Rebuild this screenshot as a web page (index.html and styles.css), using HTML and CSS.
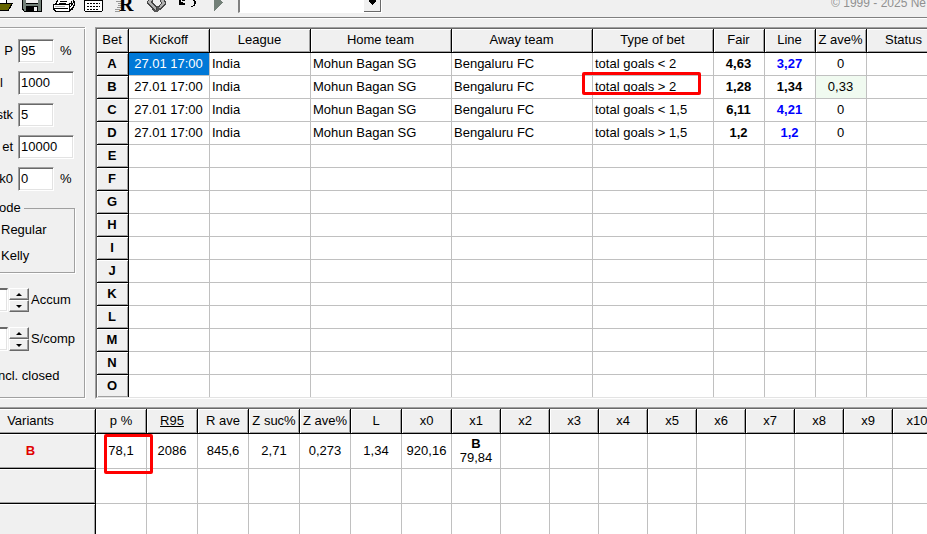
FILE: index.html
```html
<!DOCTYPE html>
<html lang="en">
<head>
<meta charset="utf-8">
<title>Bets</title>
<link rel="stylesheet" href="styles.css">
</head>
<body>
<header class="toolbar">
  <div class="tools">
    <button class="tool" aria-label="Open"><svg width="14" height="13" shape-rendering="crispEdges"><path d="M0 0h6v3h-6z" fill="#fff"/><path d="M0 3h13v1h-1v2h-1v2h-1v1h-1v2H0z" fill="#000"/><path d="M0 4h11v1h-1v2h-1v2H8v1H0z" fill="#666600"/><path d="M6 0h1v3H6z"/></svg></button>
    <button class="tool tool-save" aria-label="Save"><svg width="20" height="12" shape-rendering="crispEdges"><path d="M0 0h20v12H2v-1H1v-1H0z"/><path d="M1 0h18v11H2V9H1z" fill="#738078"/><path d="M4 0h12v3H4z" fill="#f0f0f0"/><path d="M4 3h12v1H4zM4 6h12v6H4z"/><path d="M12 7h3v4h-3z" fill="#f0f0f0"/></svg></button>
    <button class="tool tool-print" aria-label="Print"><svg width="24" height="12" shape-rendering="crispEdges"><path d="M5 0h14l-3 4h5v5l-5 2H3L1 9V4z" fill="#fff"/><path d="M5 0v1H4v2H3v1H1v5h1v1h1v1h14v-1h1V9h2V7h1V5h1V1h-1V0M3 4h12M8 1h7M7 3h7M2 8h14M15 4h2V3h2V1h1M17 4v6M18 7l4-5" fill="none" stroke="#000"/><path d="M3 6h10" stroke="#aaa"/><path d="M18 6h1v1h-1zM20 4h1v1h-1zM19 8h1v1h-1z"/></svg></button>
    <button class="tool tool-cal" aria-label="Calendar"><svg width="20" height="13" shape-rendering="crispEdges"><path d="M1 0h17v11H1z" fill="#fff"/><path d="M0 0h1v11H0zM18 0h1v11h-1zM1 11h17v1H1zM1 0h17v1H1z"/><path d="M3 3h2v1H3zM6 3h2v1H6zM9 3h2v1H9zM12 3h2v1h-2zM15 3h1v1h-1zM3 6h2v1H3zM6 6h2v1H6zM9 6h2v1H9zM12 6h2v1h-2zM15 6h1v1h-1zM3 9h2v1H3zM6 9h2v1H6zM9 9h2v1H9zM12 9h2v1h-2z"/></svg></button>
    <button class="tool tool-r" aria-label="R"><svg width="20" height="13"><path d="M1 1h5M3 3h4M3 5h4M2 7h4M0 9h5M0 11h5" transform="translate(0 .5)" stroke="#999" shape-rendering="crispEdges"/><text x="4" y="11" class="r-face">R</text></svg></button>
    <button class="tool tool-swap" aria-label="Refresh"><svg width="20" height="13" shape-rendering="crispEdges"><path d="M1 0h5v2l4 5v5H7L5 9L0 4V2zM13 0h5l1 2v2l-6 6h-2V7l3-4z" fill="#444"/><path d="M2 0h3L4 2l5 6v2L1 3zM14 0h3l1 3l-6 6V8l3-5z" fill="#b0b0b0"/><path d="M5 10h5V6l3 3v1l-3 2H7z" fill="#555"/></svg></button>
    <button class="tool tool-undo" aria-label="Undo"><svg width="18" height="8" shape-rendering="crispEdges"><path d="M0 0h2v2h2v1h2v2H0zM3 0h3v1H3zM14 0h2v1h1v3h-1v2h-2V5h1V1h-1zM12 6h2v1h-2z"/></svg></button>
    <button class="tool tool-play" aria-label="Run"><svg width="9" height="12" shape-rendering="crispEdges"><path d="M0 0h6l3 2L0 11z" fill="#738078"/></svg></button>
    <select class="picker" aria-label="Selection"><option></option></select>
  </div>
  <span class="copyright">© 1999 - 2025 Ne</span>
</header>

<main class="workspace">
  <form class="settings">
    <div class="field"><label for="p">P</label><input id="p" class="short" value="95"><span>%</span></div>
    <div class="field"><label for="bank" class="cut">l</label><input id="bank" value="1000"></div>
    <div class="field"><label for="stk">stk</label><input id="stk" class="short" value="5"></div>
    <div class="field"><label for="bet">et</label><input id="bet" value="10000"></div>
    <div class="field"><label for="k0">k0</label><input id="k0" class="short" value="0"><span>%</span></div>
    <fieldset class="mode">
      <legend>ode</legend>
      <p>Regular</p>
      <p>Kelly</p>
    </fieldset>
    <div class="stepper"><span class="well"></span><span class="arrows"><button type="button" class="up" aria-label="Accum up"></button><button type="button" class="down" aria-label="Accum down"></button></span><span>Accum</span></div>
    <div class="stepper"><span class="well"></span><span class="arrows"><button type="button" class="up" aria-label="S/comp up"></button><button type="button" class="down" aria-label="S/comp down"></button></span><span>S/comp</span></div>
    <p class="closed">ncl. closed</p>
  </form>
  <section class="grid bets">
    <table>
      <colgroup><col class="w32"><col class="w81"><col class="w101"><col class="w141"><col class="w141"><col class="w121"><col class="w51"><col class="w51"><col class="w51"><col class="w75"></colgroup>
      <thead><tr><th>Bet</th><th>Kickoff</th><th>League</th><th>Home team</th><th>Away team</th><th>Type of bet</th><th>Fair</th><th>Line</th><th>Z ave%</th><th>Status</th></tr></thead>
      <tbody id="bets"></tbody>
    </table>
  </section>
</main>

<section class="grid variants">
  <table>
    <colgroup><col class="w130"><col class="w51"><col class="w51"><col class="w51"><col class="w51"><col class="w51"><col class="w51"><col class="w50"><col class="w49" span="10"></colgroup>
    <thead><tr><th>Variants</th><th>p %</th><th><u>R95</u></th><th>R ave</th><th>Z suc%</th><th>Z ave%</th><th>L</th><th>x0</th><th>x1</th><th>x2</th><th>x3</th><th>x4</th><th>x5</th><th>x6</th><th>x7</th><th>x8</th><th>x9</th><th>x10</th></tr></thead>
    <tbody id="variants"></tbody>
  </table>
</section>
<script src="app.js"></script>
</body>
</html>
```
FILE: styles.css
```css
*, *::before, *::after { box-sizing: border-box; }
html, body { height: 100%; }
body {
  margin: 0;
  display: flex;
  flex-direction: column;
  overflow: hidden;
  background: #f0f0f0;
  color: #000;
  font: 13px/16px "Liberation Sans", Arial, sans-serif;
}
p { margin: 0; }
button { padding: 0; border: 0; background: none; }

.toolbar {
  flex: none;
  display: flex;
  justify-content: space-between;
  align-items: flex-start;
  height: 19px;
  overflow: hidden;
  border-bottom: 1px solid #fff;
  box-shadow: inset 0 -1px #808080;
}
.tools { display: flex; align-items: flex-start; }
.tool { display: block; }
.tool svg { display: block; }
.tool-save { margin-left: 8px; }
.tool-print { margin-left: 10px; }
.tool-cal { margin-left: 8px; }
.tool-r { margin-left: 11px; }
.tool-swap { margin-left: 12px; }
.tool-undo { margin-left: 12px; }
.tool-play { margin-left: 17px; }
.r-face { font: bold 20px "Liberation Serif", serif; }
.picker {
  appearance: none;
  width: 144px;
  height: 23px;
  margin: -10px 0 0 15px;
  border: 1px solid #fff;
  border-left: 2px solid #808080;
  border-radius: 0;
  background:
    linear-gradient(#000, #000) right 8px top 13px / 1px 1px no-repeat,
    linear-gradient(#000, #000) right 7px top 12px / 3px 1px no-repeat,
    linear-gradient(#000, #000) right 6px top 11px / 5px 1px no-repeat,
    linear-gradient(#000, #000) right 5px top 9px / 7px 2px no-repeat,
    linear-gradient(#696969, #696969) right 0 bottom 0 / 17px 1px no-repeat,
    linear-gradient(#696969, #696969) right 0 bottom 0 / 1px 100% no-repeat,
    linear-gradient(#f0f0f0, #f0f0f0) right 0 bottom 0 / 17px 100% no-repeat,
    #fff;
}
.copyright {
  margin-top: -5px;
  padding-right: 1px;
  color: #909090;
  font-size: 12px;
}

.workspace { flex: none; display: flex; margin-top: 8px; }

.settings {
  flex: none;
  width: 86px;
  overflow: hidden;
  padding-top: 8px;
  border: solid #fff;
  border-width: 0 1px 1px 0;
  box-shadow: inset 0 1px #a0a0a0, inset 0 2px #fff, inset -1px -1px #a0a0a0;
}
.field { display: flex; align-items: center; height: 32px; }
.field label { width: 18px; padding-right: 5px; display: flex; justify-content: flex-end; }
.field label.cut { justify-content: flex-start; }
.field span { margin-left: 6px; }
.field input {
  width: 56px;
  height: 24px;
  padding: 0 0 2px 2px;
  border: 1px solid;
  border-color: #a0a0a0 #fff #fff #a0a0a0;
  border-radius: 0;
  box-shadow: inset 1px 1px #696969, inset -1px -1px #e3e3e3;
  background: #fff;
  color: #000;
  font: inherit;
}
.field input.short { width: 36px; }
.mode {
  width: 76px;
  margin: 5px 0 0 -1px;
  padding: 6px 0 8px 1px;
  border: 1px solid #a0a0a0;
  box-shadow: 1px 1px #fff;
}
.mode legend { margin-left: -2px; padding: 0 3px 0 0; height: 16px; }
.mode p { height: 26px; }
.mode p:last-child { height: 16px; }
.stepper { display: flex; align-items: center; height: 24px; margin-top: 15px; }
.well { width: 8px; height: 24px; background: #fff; border: solid #fff; border-top-color: #696969; border-width: 2px 1px 1px 0; box-shadow: inset -1px -1px #e3e3e3; }
.arrows { display: flex; flex-direction: column; width: 20px; margin: 0 2px 0 1px; }
.up, .down {
  height: 12px;
  display: flex;
  align-items: center;
  justify-content: center;
  background: #f0f0f0;
  border: 1px solid;
  border-color: #fff #696969 #696969 #fff;
  box-shadow: inset -1px -1px #a0a0a0;
}
.up::before, .down::before { content: ""; border: 3px solid transparent; }
.up::before { border-top: 0; border-bottom-color: #000; }
.down::before { border-bottom: 0; border-top-color: #000; }
.closed { margin: 17px 0 0 -2px; }

.grid {
  overflow: hidden;
  background: #fff;
  border-top: 1px solid #a0a0a0;
}
.grid table {
  table-layout: fixed;
  width: 100%;
  border-spacing: 0;
  border-top: 1px solid #696969;
}
.bets {
  flex: 1;
  min-width: 0;
  margin-left: 9px;
  border-left: 1px solid #a0a0a0;
  border-bottom: 1px solid #fff;
}
.bets table { min-width: 846px; border-left: 1px solid #696969; border-bottom: 1px solid #e3e3e3; }
.variants { flex: 1; margin-top: 8px; }
.variants table { min-width: 976px; margin-left: -34px; }

.w32 { width: 32px; } .w49 { width: 49px; } .w50 { width: 50px; }
.w51 { width: 51px; } .w75 { width: 75px; } .w81 { width: 81px; }
.w101 { width: 101px; } .w121 { width: 121px; } .w130 { width: 130px; }
.w141 { width: 141px; }

th, td {
  padding: 0;
  border: solid #c0c0c0;
  border-width: 0 1px 1px 0;
  text-align: center;
  white-space: nowrap;
}
th {
  background: #f0f0f0;
  border-color: #000;
  font-weight: normal;
  box-shadow: inset 1px 1px #fff, inset -1px -1px #a0a0a0;
}
.bets th { height: 24px; padding: 0 1px 1px 0; }
.bets td, .bets tbody th { height: 23px; padding: 0 1px 1px 0; }
.bets tbody th, .strong { font-weight: bold; }
.bets tbody tr:last-child > * { height: 22px; border-bottom: 0; }
.bets td.text { text-align: left; padding-left: 2px; }
.blue { color: #00f; }
.picked { background: #0078d7; color: #fff; }
.value { background: #f0faf0; }
.variants th { height: 25px; padding-bottom: 1px; }
.variants td, .variants tbody th { height: 35px; line-height: 14px; padding-bottom: 0; }
.variants tbody th { color: #e00000; font-weight: bold; }
.split::first-line { font-weight: bold; }

.marked { position: relative; }
.marked::after {
  content: "";
  position: absolute;
  z-index: 1;
  border: 3px solid #f00;
  border-radius: 2px;
}
.mark-type::after { left: -11px; top: -4px; width: 119px; height: 23px; }
.mark-p::after { left: 8px; top: 0; width: 49px; height: 40px; }
```
FILE: app.js
```js
const bets = [
  ["total goals < 2", "4,63", "3,27", "0"],
  ["total goals > 2", "1,28", "1,34", "0,33"],
  ["total goals < 1,5", "6,11", "4,21", "0"],
  ["total goals > 1,5", "1,2", "1,2", "0"],
];

function cell(row, tag, text, cls) {
  const el = document.createElement(tag);
  el.innerText = text || "";
  if (cls) el.className = cls;
  row.append(el);
}

const betBody = document.getElementById("bets");
[..."ABCDEFGHIJKLMNO"].forEach((letter, i) => {
  const row = betBody.insertRow();
  cell(row, "th", letter);
  const bet = bets[i];
  if (!bet) {
    for (let n = 0; n < 9; n++) cell(row, "td");
    return;
  }
  const best = i === 1;
  cell(row, "td", "27.01 17:00", i === 0 ? "picked" : "");
  cell(row, "td", "India", "text");
  cell(row, "td", "Mohun Bagan SG", "text");
  cell(row, "td", "Bengaluru FC", "text");
  cell(row, "td", bet[0], best ? "text marked mark-type" : "text");
  cell(row, "td", bet[1], "strong");
  cell(row, "td", bet[2], best ? "strong" : "strong blue");
  cell(row, "td", bet[3], best ? "value" : "");
  cell(row, "td");
});

const variantBody = document.getElementById("variants");
const values = ["78,1", "2086", "845,6", "2,71", "0,273", "1,34", "920,16", "B\n79,84"];
const marks = { 0: "marked mark-p", 7: "split" };
for (let r = 0; r < 3; r++) {
  const row = variantBody.insertRow();
  cell(row, "th", r ? "" : "B");
  for (let n = 0; n < 17; n++) {
    cell(row, "td", r ? "" : values[n], r ? "" : marks[n]);
  }
}
```
